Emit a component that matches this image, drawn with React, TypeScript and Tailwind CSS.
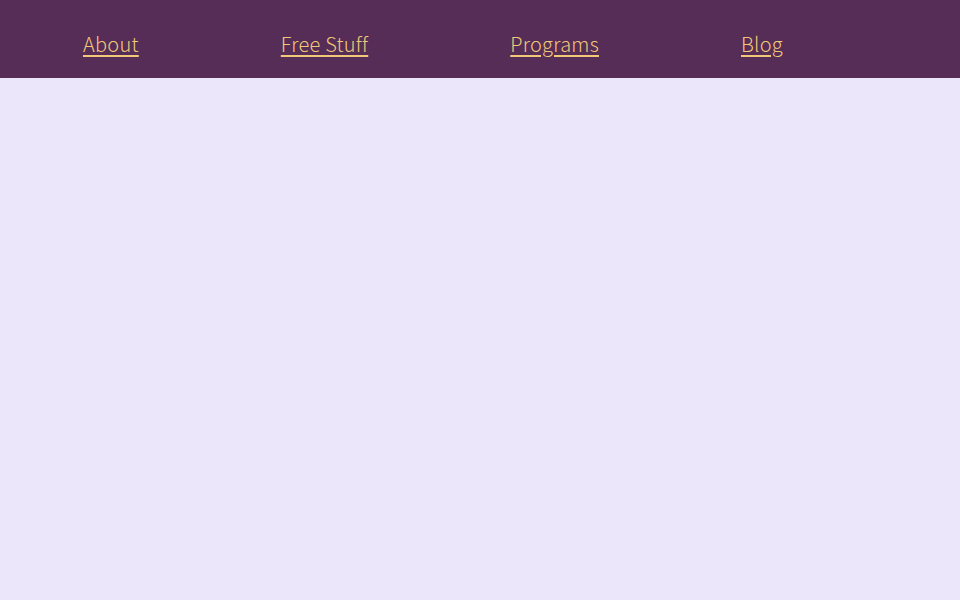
export default function App() {
  const links = ['About', 'Free Stuff', 'Programs', 'Blog'];

  return (
    <div className="min-h-screen bg-[#ebe6fa] font-['Noto_Sans_CJK_JP','Noto_Sans',sans-serif]">
      <nav className="h-[78px] bg-[#552d56] flex items-center pl-[83px] pt-[10px] gap-[142px]">
        {links.map((l) => (
          <a
            key={l}
            href="#"
            className="text-[20px] font-light tracking-[0.25px] text-[#f1c878] underline underline-offset-[3px] decoration-[1.5px]"
          >
            {l}
          </a>
        ))}
      </nav>
    </div>
  );
}
